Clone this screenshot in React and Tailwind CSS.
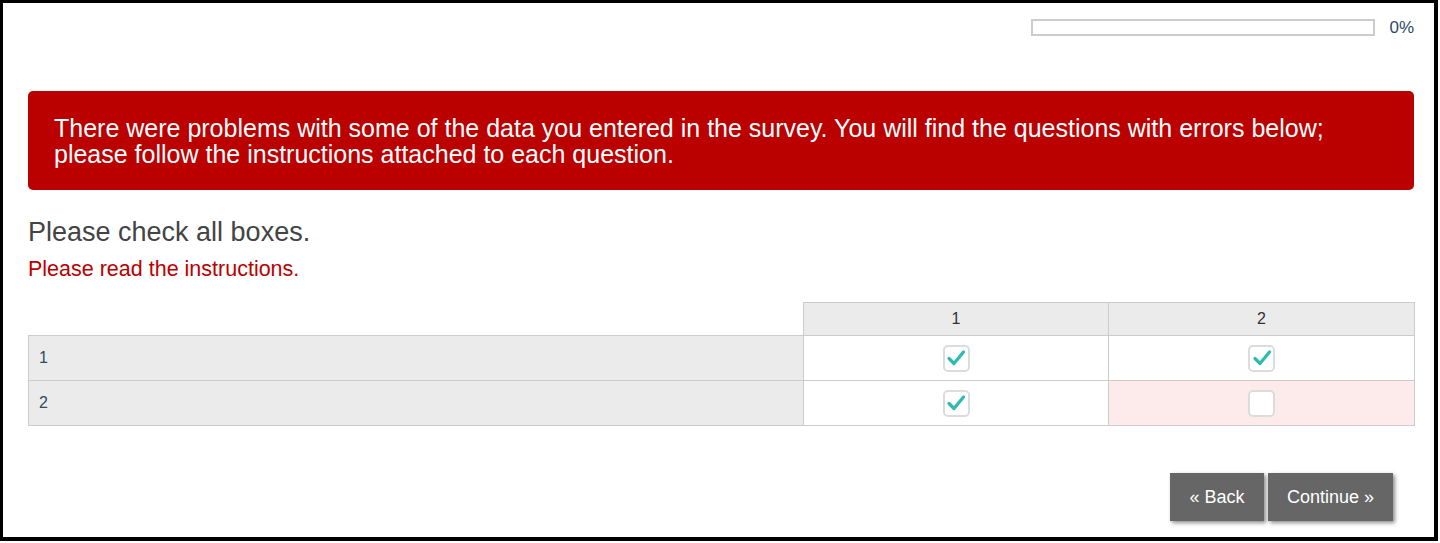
import React from 'react';

const rows = [
  { label: '1', values: [true, true] },
  { label: '2', values: [true, false] },
];

function CheckBox({ checked }) {
  return (
    <span className="inline-flex w-[27px] h-[27px] items-center justify-center rounded-[5px] border-2 border-[#dcdcdc] bg-white align-middle">
      {checked && (
        <svg width="20" height="20" viewBox="0 0 20 20">
          <path d="M3 10.5 L8 15.5 L17.5 4" fill="none" stroke="#2ebaae" strokeWidth="3.2" strokeLinecap="round" strokeLinejoin="round" />
        </svg>
      )}
    </span>
  );
}

export default function App() {
  return (
    <div className="w-[1440px] h-[543px] bg-white font-['Liberation_Sans',Arial,sans-serif]">
      <div className="w-[1438px] h-[541px] border-t-[3px] border-l-[3px] border-r-4 border-b-4 border-black pl-[25px] pr-[20px] flex flex-col">
        <div className="flex items-center justify-end mt-[16px] h-[17px]">
          <div className="w-[344px] h-[17px] border-2 border-[#cccccc] bg-white" />
          <span className="ml-[14px] text-[17px] text-[#2f4a63] leading-none">0%</span>
        </div>

        <div className="mt-[55px] h-[99px] rounded-[5px] bg-[#bb0000] text-white text-[25px] leading-[26px] pl-[26px] pr-[20px] pt-[24px]">
          There were problems with some of the data you entered in the survey. You will find the questions with errors below;
          <br />
          please follow the instructions attached to each question.
        </div>

        <h2 className="mt-[27px] text-[27px] leading-[30px] text-[#444444]">Please check all boxes.</h2>
        <p className="mt-[10px] text-[21.5px] leading-[25px] text-[#bb0000]">Please read the instructions.</p>

        <table className="mt-[20px] w-[1386px] border-collapse table-fixed text-[16px] text-[#333333]">
          <colgroup>
            <col className="w-[775px]" />
            <col className="w-[305px]" />
            <col className="w-[306px]" />
          </colgroup>
          <thead>
            <tr className="h-[33px]">
              <th className="bg-white" />
              <th className="bg-[#ebebeb] border border-[#cccccc] font-normal text-center">1</th>
              <th className="bg-[#ebebeb] border border-[#cccccc] font-normal text-center">2</th>
            </tr>
          </thead>
          <tbody>
            {rows.map((row) => (
              <tr key={row.label} className="h-[45px]">
                <td className="bg-[#ebebeb] border border-[#cccccc] pl-[10px] text-[#2f4a63]">{row.label}</td>
                {row.values.map((v, i) => (
                  <td
                    key={i}
                    className={`border border-[#cccccc] text-center ${v ? 'bg-white' : 'bg-[#fdeaea]'}`}
                  >
                    <CheckBox checked={v} />
                  </td>
                ))}
              </tr>
            ))}
          </tbody>
        </table>

        <div className="mt-[47px] flex justify-end gap-[4px] pr-[21px]">
          <button className="w-[94px] h-[48px] bg-[#666666] text-white text-[18px] shadow-[2px_2px_4px_rgba(0,0,0,0.45)]">
            « Back
          </button>
          <button className="w-[125px] h-[48px] bg-[#666666] text-white text-[18px] shadow-[2px_2px_4px_rgba(0,0,0,0.45)]">
            Continue »
          </button>
        </div>
      </div>
    </div>
  );
}
